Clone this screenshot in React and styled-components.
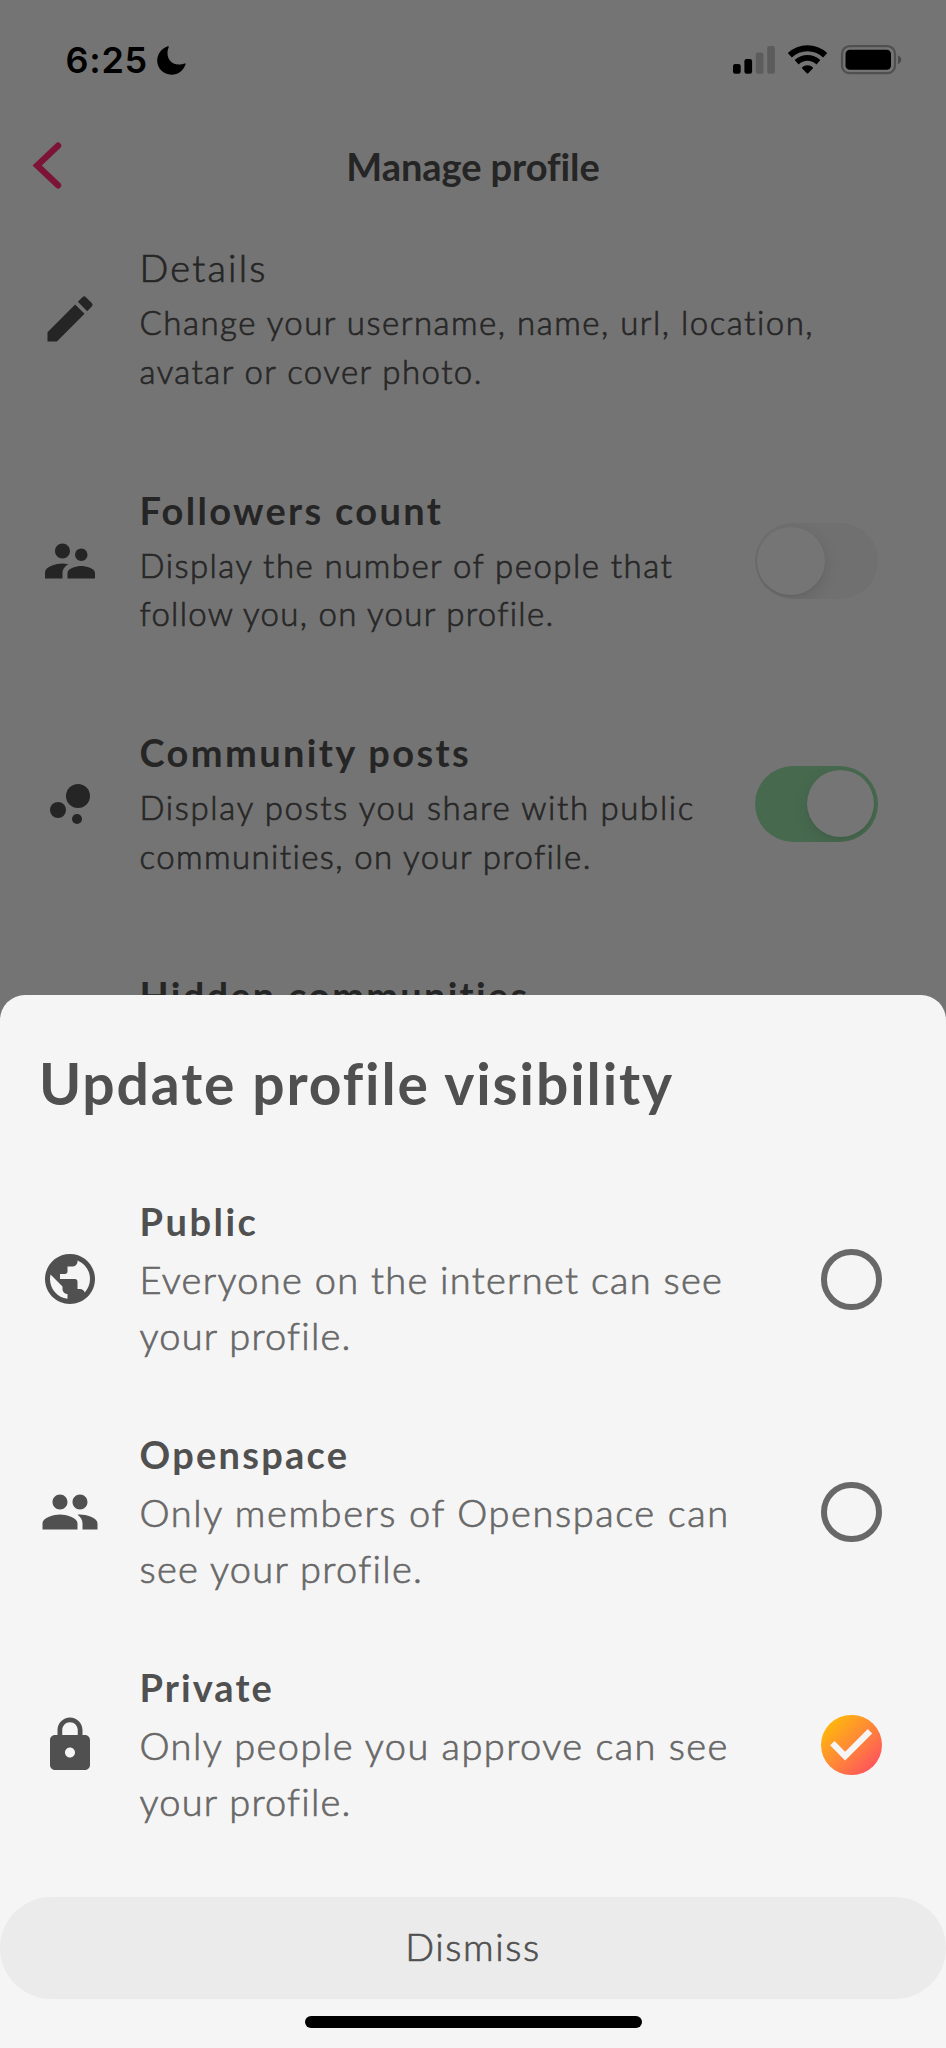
import React from "react";
import styled, { createGlobalStyle } from "styled-components";
import {
  MdEdit,
  MdSupervisorAccount,
  MdBubbleChart,
  MdPublic,
  MdGroup,
  MdLock,
} from "react-icons/md";

const GlobalStyle = createGlobalStyle`
  *, *::before, *::after { box-sizing: border-box; }
  body {
    margin: 0;
    background: #747474;
    font-family: Lato, "Open Sans", sans-serif;
    font-kerning: normal;
  }
`;

const Screen = styled.div`
  position: relative;
  width: 946px;
  height: 2048px;
  overflow: hidden;
  background: #747474;
  color: #252525;
`;

const StatusBar = styled.header`
  display: flex;
  align-items: center;
  justify-content: space-between;
  height: 132.3px;
  padding: 0 44px 12px 65.5px;
`;

const Clock = styled.div`
  display: flex;
  align-items: center;
  gap: 9px;
  color: #000;
  font: 600 36px/44px Inter, sans-serif;
  letter-spacing: 0.7px;
`;

const NavBar = styled.nav`
  display: grid;
  grid-template-columns: 80px 1fr 80px;
  align-items: center;
  height: 66px;
`;

const BackButton = styled.button`
  display: flex;
  width: 80px;
  padding: 0 0 0 32px;
  border: 0;
  background: none;
`;

const NavTitle = styled.h1`
  margin: 0;
  padding-top: 2px;
  text-align: center;
  font-size: 38px;
  line-height: 46px;
  font-weight: 700;
  letter-spacing: -0.06px;
`;

const Row = styled.div`
  display: flex;
  align-items: center;
  height: ${(p) => (p.$sheet ? "232.8px" : "242.4px")};
  padding: 1.2px ${(p) => (p.$sheet ? 64.5 : 68)}px 0 39.5px;
`;

const IconSlot = styled.div`
  display: flex;
  flex: none;
  width: 60px;
  height: 60px;
  margin: 0 40px 2.5px 0;
  font-size: 60px;
`;

const Copy = styled.div`
  flex: 1;
  white-space: nowrap;
`;

const RowTitle = styled.h3`
  margin: 0 0 ${(p) => (p.$sheet ? 7 : 8)}px;
  font-size: 38px;
  line-height: 46px;
  font-weight: ${(p) => (p.$light ? 300 : 700)};
  letter-spacing: ${(p) => p.$track}px;
  -webkit-text-stroke: ${(p) => (p.$light ? "0.7px" : "0")};
`;

const Description = styled.p`
  margin: 0;
  font-weight: 300;
  -webkit-text-stroke: 0.7px;
  color: ${(p) => (p.$sheet ? "#686868" : "#272727")};
  font-size: ${(p) => (p.$sheet ? 38 : 33)}px;
  line-height: ${(p) => (p.$sheet ? 56 : 48.6)}px;
`;

const Line = styled.span`
  display: block;
  letter-spacing: ${(p) => p.$track}px;
`;

const Switch = styled.div`
  display: flex;
  align-items: center;
  justify-content: ${(p) => (p.$on ? "flex-end" : "flex-start")};
  flex: none;
  width: 123.5px;
  height: 76px;
  margin-bottom: 2.5px;
  padding: 0 4px 0 ${(p) => (p.$on ? 4 : 2.5)}px;
  border-radius: 38px;
  overflow: hidden;
  background: ${(p) => (p.$on ? "#476a4f" : "#707070")};
`;

const Knob = styled.div`
  width: 67.5px;
  height: 67.5px;
  border-radius: 50%;
  background: #757575;
  box-shadow: 0 5px 16px rgba(0, 0, 0, 0.1), 0 1px 2px rgba(0, 0, 0, 0.06);
`;

const Radio = styled.div`
  display: grid;
  flex: none;
  place-items: center;
  width: 60.5px;
  height: 60.5px;
  margin-bottom: 2.5px;
  border-radius: 50%;
  border: ${(p) => (p.$checked ? "0" : "6px solid #686868")};
  background: ${(p) =>
    p.$checked ? "linear-gradient(135deg, #ffc400 2%, #ff8b35 48%, #ff4268 100%)" : "none"};
`;

const Sheet = styled.section`
  position: absolute;
  left: 0;
  right: 0;
  bottom: 0;
  height: 1053px;
  display: flex;
  flex-direction: column;
  padding-top: 54px;
  border-radius: 25px 25px 0 0;
  background: #f5f5f5;
  color: #505050;
`;

const SheetTitle = styled.h2`
  margin: 0 0 46.6px;
  padding-left: 39px;
  font-size: 57px;
  line-height: 68px;
  font-weight: 700;
  letter-spacing: 1.9px;
`;

const DismissButton = styled.button`
  width: 100%;
  height: 102px;
  margin: 35px 0 17px;
  padding: 0 0 3px;
  border: 0;
  border-radius: 51px;
  background: #ebebeb;
  color: #505050;
  font: 300 38px/46px Lato, sans-serif;
  letter-spacing: 1.6px;
  -webkit-text-stroke: 0.7px;
`;

const HomeIndicator = styled.div`
  align-self: center;
  width: 337px;
  height: 12px;
  border-radius: 6px;
  background: #000;
`;

const Moon = () => (
  <svg width="29" height="29" viewBox="0 0 29 29">
    <path
      d="M10.8.3C11.6 0 12 .5 11.7 1.2C10.8 3.2 10.5 5.2 10.5 7.2C10.5 13.8 15.2 18.5 21.8 18.5C24 18.5 25.8 18.1 27.4 17.5C28.3 17.2 28.8 17.7 28.5 18.5C26.2 24.8 21 28.7 14.6 28.7C6.4 28.7.2 22.7.2 14.6C.2 8.2 4.5 2.5 10.8.3Z"
      fill="#000"
    />
  </svg>
);

const StatusIcons = () => (
  <svg width="169" height="30" viewBox="0 0 169 30">
    <rect x="0" y="19" width="7.7" height="9.7" rx="2.2" />
    <rect x="11.4" y="14" width="7.7" height="14.7" rx="2.2" />
    <rect x="22.8" y="7.6" width="7.7" height="21.1" rx="2.2" fill="#5c5c5c" />
    <rect x="34.2" y="1" width="7.7" height="27.7" rx="2.2" fill="#5c5c5c" />
    <g fill="none" stroke="#000">
      <path d="M56.8 10.2C67 .8 82 .8 92.2 10.2" strokeWidth="6" />
      <path d="M63.6 17.2C70.2 11.4 78.8 11.4 85.4 17.2" strokeWidth="5.8" />
    </g>
    <path d="M69.1 22.5C72 19.4 77 19.4 79.9 22.5C80.2 22.9 80.1 23.3 79.8 23.6L75.2 28.2C74.8 28.6 74.2 28.6 73.8 28.2L69.2 23.6C68.9 23.3 68.8 22.9 69.1 22.5Z" />
    <rect x="109" y="1.2" width="53" height="27" rx="7.5" fill="none" stroke="#505050" strokeWidth="2.2" />
    <rect x="112.5" y="4.8" width="45.5" height="20" rx="4.3" />
    <path d="M165 10.5C169.3 12 169.3 17.6 165 19.2Z" fill="#4a4a4a" />
  </svg>
);

const BackChevron = () => (
  <svg width="30" height="47" viewBox="0 0 30 47">
    <path
      d="M26 3.7L5.2 23.5L26 43.3"
      fill="none"
      stroke="#7c1437"
      strokeWidth="6.4"
      strokeLinecap="round"
      strokeLinejoin="miter"
    />
  </svg>
);

const CheckMark = () => (
  <svg width="60" height="60" viewBox="0 0 60 60">
    <path d="M11.3 28.2L24.1 41.2L49 16.3" fill="none" stroke="#f5f5f5" strokeWidth="6.2" />
  </svg>
);

const settings = [
  {
    title: "Details",
    track: 2.2,
    light: true,
    Icon: MdEdit,
    lines: [
      ["Change your username, name, url, location,", 1.51],
      ["avatar or cover photo.", 1.44],
    ],
  },
  {
    title: "Followers count",
    track: 2.3,
    Icon: MdSupervisorAccount,
    toggle: "off",
    lines: [
      ["Display the number of people that", 1.46],
      ["follow you, on your profile.", 1.3],
    ],
  },
  {
    title: "Community posts",
    track: 2.36,
    Icon: MdBubbleChart,
    toggle: "on",
    lines: [
      ["Display posts you share with public", 1.65],
      ["communities, on your profile.", 1.4],
    ],
  },
  { title: "Hidden communities", track: 2.24, lines: [["\u00a0", 0], ["\u00a0", 0]] },
];

const options = [
  {
    title: "Public",
    track: 2.5,
    Icon: MdPublic,
    lines: [
      ["Everyone on the internet can see", 1.28],
      ["your profile.", 1.22],
    ],
  },
  {
    title: "Openspace",
    track: 2.25,
    Icon: MdGroup,
    lines: [
      ["Only members of Openspace can", 1.59],
      ["see your profile.", 1.31],
    ],
  },
  {
    title: "Private",
    track: 2.05,
    Icon: MdLock,
    checked: true,
    lines: [
      ["Only people you approve can see", 1.45],
      ["your profile.", 1.22],
    ],
  },
];

const Item = ({ item, sheet, children }) => (
  <Row $sheet={sheet}>
    <IconSlot>{item.Icon && <item.Icon />}</IconSlot>
    <Copy>
      <RowTitle $sheet={sheet} $track={item.track} $light={item.light}>
        {item.title}
      </RowTitle>
      <Description $sheet={sheet}>
        {item.lines.map(([text, track], i) => (
          <Line key={i} $track={track}>
            {text}
          </Line>
        ))}
      </Description>
    </Copy>
    {children}
  </Row>
);

export default function App() {
  return (
    <Screen>
      <GlobalStyle />
      <StatusBar>
        <Clock>
          6:25
          <Moon />
        </Clock>
        <StatusIcons />
      </StatusBar>
      <NavBar>
        <BackButton aria-label="Back">
          <BackChevron />
        </BackButton>
        <NavTitle>Manage profile</NavTitle>
      </NavBar>
      <main>
        {settings.map((item) => (
          <Item key={item.title} item={item}>
            {item.toggle && (
              <Switch $on={item.toggle === "on"}>
                <Knob />
              </Switch>
            )}
          </Item>
        ))}
      </main>
      <Sheet>
        <SheetTitle>Update profile visibility</SheetTitle>
        {options.map((item) => (
          <Item key={item.title} item={item} sheet>
            <Radio $checked={item.checked}>{item.checked && <CheckMark />}</Radio>
          </Item>
        ))}
        <DismissButton>Dismiss</DismissButton>
        <HomeIndicator />
      </Sheet>
    </Screen>
  );
}
